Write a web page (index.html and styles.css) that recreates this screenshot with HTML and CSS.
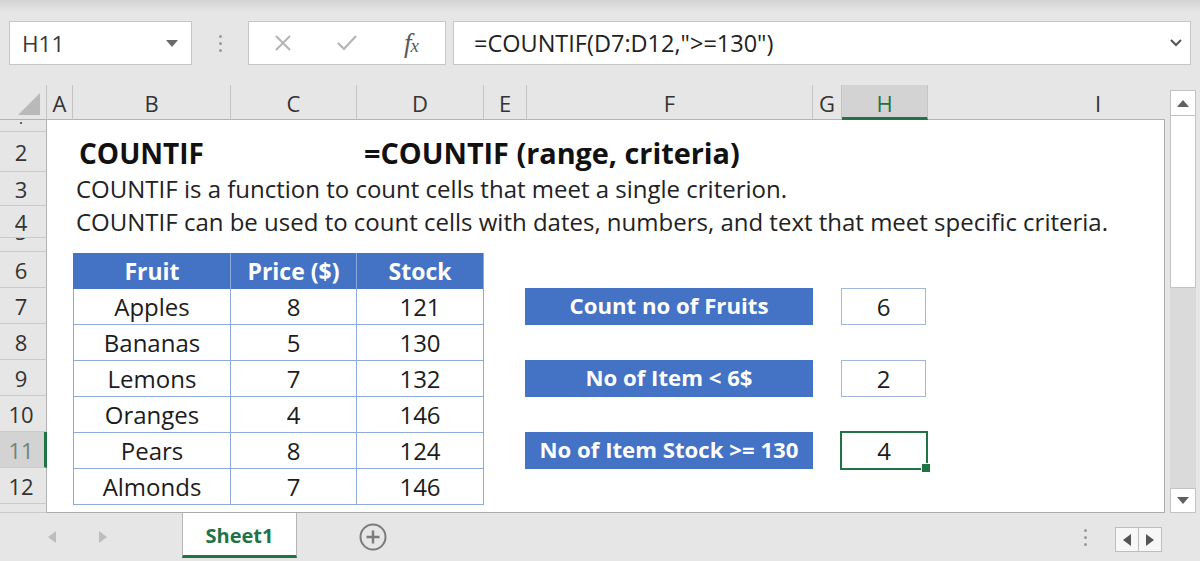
FILE: index.html
```html
<!DOCTYPE html>
<html>
<head>
<meta charset="utf-8">
<title>COUNTIF</title>
<link rel="stylesheet" href="styles.css">
</head>
<body>
<div class="app">
  <div class="topbar">
    <div class="namebox">
      <span class="nb-text">H11</span>
      <svg class="nb-caret" width="12" height="7" viewBox="0 0 12 7"><polygon points="0,0 12,0 6,7" fill="#6a6a6a"/></svg>
    </div>
    <div class="vdots"><i></i><i></i><i></i></div>
    <div class="fnbox">
      <div class="slot"><svg width="18" height="18" viewBox="0 0 18 18"><path d="M2 2 L16 16 M16 2 L2 16" stroke="#b4b4b4" stroke-width="2" fill="none"/></svg></div>
      <div class="slot"><svg width="22" height="18" viewBox="0 0 22 18"><path d="M2 9 L8 15 L20 2" stroke="#b4b4b4" stroke-width="2.2" fill="none"/></svg></div>
      <div class="slot"><span class="fx">f<span class="fx-x">x</span></span></div>
    </div>
    <div class="formula">
      <span class="f-text">=COUNTIF(D7:D12,"&gt;=130")</span>
      <svg width="12" height="8" viewBox="0 0 12 8"><path d="M1 1 L6 6 L11 1" stroke="#555" stroke-width="2" fill="none"/></svg>
    </div>
  </div>

  <div class="main">
    <div class="grid">
      <div class="corner"><svg width="22" height="22" viewBox="0 0 22 22"><polygon points="22,0 22,22 0,22" fill="#b9b9b9"/></svg></div>
      <div class="ch">A</div>
      <div class="ch">B</div>
      <div class="ch">C</div>
      <div class="ch">D</div>
      <div class="ch">E</div>
      <div class="ch">F</div>
      <div class="ch">G</div>
      <div class="ch sel">H</div>
      <div class="ch ch-i">I</div>

      <div class="rh r1"><span class="stub"></span></div>
      <div class="rh r2">2</div>
      <div class="rh r3">3</div>
      <div class="rh r4">4</div>
      <div class="rh r5 clip"><span>5</span></div>
      <div class="rh r6">6</div>
      <div class="rh r7">7</div>
      <div class="rh r8">8</div>
      <div class="rh r9">9</div>
      <div class="rh r10">10</div>
      <div class="rh r11 sel">11</div>
      <div class="rh r12">12</div>
      <div class="rh r13"></div>

      <div class="sheet"></div>

      <div class="title r2 t-left">COUNTIF</div>
      <div class="title r2 t-right">=COUNTIF (range, criteria)</div>
      <div class="desc r3">COUNTIF is a function to count cells that meet a single criterion.</div>
      <div class="desc r4">COUNTIF can be used to count cells with dates, numbers, and text that meet specific criteria.</div>

      <div class="tbl">
        <div class="th first">Fruit</div><div class="th">Price ($)</div><div class="th">Stock</div>
        <div class="td first">Apples</div><div class="td">8</div><div class="td">121</div>
        <div class="td first">Bananas</div><div class="td">5</div><div class="td">130</div>
        <div class="td first">Lemons</div><div class="td">7</div><div class="td">132</div>
        <div class="td first">Oranges</div><div class="td">4</div><div class="td">146</div>
        <div class="td first">Pears</div><div class="td">8</div><div class="td">124</div>
        <div class="td first">Almonds</div><div class="td">7</div><div class="td">146</div>
      </div>

      <div class="lbl r7">Count no of Fruits</div>
      <div class="val r7">6</div>
      <div class="lbl r9">No of Item &lt; 6$</div>
      <div class="val r9">2</div>
      <div class="lbl r11">No of Item Stock &gt;= 130</div>
      <div class="val r11 sel">4</div>
    </div>

    <div class="vscroll">
      <div class="sb-btn up"><svg width="12" height="7" viewBox="0 0 12 7"><polygon points="0,7 12,7 6,0" fill="#606060"/></svg></div>
      <div class="sb-thumb"></div>
      <div class="sb-track"></div>
      <div class="sb-btn down"><svg width="12" height="7" viewBox="0 0 12 7"><polygon points="0,0 12,0 6,7" fill="#606060"/></svg></div>
    </div>
  </div>

  <div class="tabbar">
    <div class="tb-nav">
      <span class="tri-l"></span>
      <span class="tri-r"></span>
    </div>
    <div class="tab">Sheet1</div>
    <div class="plus"><svg width="28" height="28" viewBox="0 0 28 28"><circle cx="14" cy="14" r="12.5" stroke="#7b7b7b" stroke-width="2" fill="none"/><path d="M14 7.5 V20.5 M7.5 14 H20.5" stroke="#7b7b7b" stroke-width="2.4"/></svg></div>
    <div class="spacer"></div>
    <div class="hdots"><i></i><i></i><i></i></div>
    <div class="navbox">
      <div class="nb-half"><svg width="8" height="12" viewBox="0 0 8 12"><polygon points="8,0 8,12 0,6" fill="#555"/></svg></div>
      <div class="nb-half"><svg width="8" height="12" viewBox="0 0 8 12"><polygon points="0,0 0,12 8,6" fill="#555"/></svg></div>
    </div>
  </div>
</div>
</body>
</html>
```

FILE: styles.css
```css
* { box-sizing: border-box; }
html, body { margin: 0; padding: 0; }
body {
  width: 1200px;
  height: 561px;
  overflow: hidden;
  background: #e6e6e6;
  font-family: "Open Sans", "Noto Sans", sans-serif;
  color: #222;
}
.app { width: 1200px; height: 561px; display: flex; flex-direction: column; }

/* ---------- top bar ---------- */
.topbar {
  height: 85px;
  flex: none;
  display: flex;
  align-items: flex-start;
  padding: 21px 9px 0 9px;
  background: linear-gradient(#d3d3d3 0, #e6e6e6 12px);
}
.namebox {
  width: 183px;
  height: 44px;
  background: #fff;
  border: 1px solid #c6c6c6;
  display: flex;
  align-items: center;
  justify-content: space-between;
  padding: 0 13px 0 12px;
}
.nb-text { font-size: 22.5px; color: #3a3a3a; }
.vdots {
  width: 56px;
  height: 44px;
  display: flex;
  flex-direction: column;
  align-items: center;
  justify-content: center;
  gap: 4px;
}
.vdots i { display: block; width: 3px; height: 3px; border-radius: 50%; background: #9a9a9a; }
.fnbox {
  width: 198px;
  height: 44px;
  background: #fff;
  border: 1px solid #c6c6c6;
  display: flex;
  align-items: center;
  padding-left: 2px;
}
.slot { width: 64px; display: flex; justify-content: center; align-items: center; }
.fx { font-family: "Liberation Serif", serif; font-style: italic; font-size: 27px; color: #5a5a5a; letter-spacing: -1px; }
.fx-x { font-size: 19px; }
.formula {
  margin-left: 7px;
  flex: 1;
  height: 44px;
  background: #fff;
  border: 1px solid #c6c6c6;
  display: flex;
  align-items: center;
  justify-content: space-between;
  padding: 0 8px 0 20px;
}
.f-text { font-size: 23.5px; color: #222; }

/* ---------- grid ---------- */
.main { height: 428px; flex: none; display: flex; }
.grid {
  width: 1165px;
  height: 428px;
  overflow: hidden;
  display: grid;
  grid-template-columns: 47px 26px 158px 126px 127px 43px 286px 29px 86px 237px;
  grid-template-rows: 35px 12px 40px 34px 32px 14px repeat(7, 36px) 9px;
}
.corner {
  grid-row: 1; grid-column: 1;
  display: flex; justify-content: flex-end; align-items: flex-end;
  padding: 0 6px 4px 0;
  border-right: 1px solid #c4c4c4;
  border-bottom: 1px solid #b3b3b3;
}
.ch {
  grid-row: 1;
  display: flex; align-items: center; justify-content: center;
  font-size: 22px; color: #333;
  border-right: 1px solid #c4c4c4;
  border-bottom: 1px solid #b3b3b3;
  padding-top: 1px;
}
.ch.sel { background: #d3d3d3; color: #217346; border-bottom: 3px solid #217346; padding-top: 3px; }
.ch-i { border-right: none; padding-left: 103px; }

.rh {
  grid-column: 1;
  display: flex; align-items: center; justify-content: center;
  font-size: 22px; line-height: 1; color: #333;
  background: #e6e6e6;
  border-right: 1px solid #b3b3b3;
  border-bottom: 1px solid #cacaca;
  overflow: hidden;
  padding-right: 4px;
}
.rh.sel { background: #d3d3d3; color: #6f8576; border-right: 3px solid #217346; padding-right: 2px; }
.rh.clip { align-items: flex-start; }
.rh.clip span { line-height: 26px; margin-top: -20px; }
.stub { display: block; width: 2px; height: 2px; background: #666; margin-top: -6px; }

.r1 { grid-row: 2; } .r2 { grid-row: 3; } .r3 { grid-row: 4; } .r4 { grid-row: 5; }
.r5 { grid-row: 6; } .r6 { grid-row: 7; } .r7 { grid-row: 8; } .r8 { grid-row: 9; }
.r9 { grid-row: 10; } .r10 { grid-row: 11; } .r11 { grid-row: 12; } .r12 { grid-row: 13; }
.r13 { grid-row: 14; }

.sheet {
  grid-column: 2 / -1;
  grid-row: 2 / -1;
  background: #fff;
  border-right: 1px solid #ababab;
  border-bottom: 1px solid #ababab;
}

.title {
  font-size: 28px; font-weight: 700; color: #111;
  white-space: nowrap;
  display: flex; align-items: center;
  padding-top: 1px;
}
.t-left { grid-column: 3 / span 2; padding-left: 6px; }
.t-right { grid-column: 5 / -1; padding-left: 7px; font-size: 28.8px; }
.desc {
  grid-column: 3 / -1;
  font-size: 24px; line-height: 1; color: #222;
  white-space: nowrap;
  display: flex; align-items: center;
  padding-left: 3px;
}

.tbl {
  grid-column: 3 / 6;
  grid-row: 7 / 14;
  display: grid;
  grid-template-columns: 158px 126px 127px;
  grid-template-rows: 36px repeat(6, 36px);
  padding-top: 1px;
}
.th, .td {
  display: flex; align-items: center; justify-content: center;
  font-size: 24px; line-height: 1;
}
.th {
  background: #4472c4; color: #fff; font-weight: 700; font-size: 23px;
  border-right: 1px solid #8eaadb;
}
.td {
  color: #1c1c1c;
  border-right: 1px solid #8eaadb;
  border-bottom: 1px solid #8eaadb;
}
.th.first { border-left: 1px solid #4472c4; }
.td.first { border-left: 1px solid #8eaadb; }

.lbl {
  grid-column: 7;
  margin: 0 0 -1px -2px;
  background: #4472c4;
  color: #fff; font-weight: 700; font-size: 22.2px; line-height: 1;
  display: flex; align-items: center; justify-content: center;
  white-space: nowrap;
}
.val {
  grid-column: 9;
  margin: 0 2px -1px -1px;
  border: 1px solid #a3b7dd;
  display: flex; align-items: center; justify-content: center;
  font-size: 24px; line-height: 1; color: #1c1c1c;
}
.val.sel {
  position: relative;
  border: 2px solid #217346;
  margin: -1px 0 -2px -2px;
}
.val.sel::after {
  content: "";
  position: absolute;
  right: -5px; bottom: -5px;
  width: 8px; height: 8px;
  background: #217346;
  border: 1px solid #fff;
}

/* ---------- vertical scrollbar ---------- */
.vscroll {
  width: 26px;
  margin-left: 5px;
  padding-top: 5px;
  display: flex; flex-direction: column;
}
.sb-btn {
  height: 26px; flex: none;
  background: #fff;
  border: 1px solid #c3c3c3;
  display: flex; align-items: center; justify-content: center;
}
.sb-btn.down { height: 25px; }
.sb-thumb { height: 172px; flex: none; background: #fff; border: 1px solid #c3c3c3; border-top: none; }
.sb-track { flex: 1; background: #dadada; }

/* ---------- tab bar ---------- */
.tabbar { height: 48px; flex: none; display: flex; align-items: stretch; }
.tb-nav { width: 182px; display: flex; align-items: center; padding-left: 48px; }
.tri-l, .tri-r { display: block; width: 0; height: 0; border-top: 6px solid transparent; border-bottom: 6px solid transparent; }
.tri-l { border-right: 8px solid #bdbdbd; }
.tri-r { border-left: 8px solid #bdbdbd; margin-left: 43px; }
.tab {
  width: 115px;
  background: #fff;
  border-left: 1px solid #b5b5b5;
  border-right: 1px solid #b5b5b5;
  border-bottom: 3px solid #217346;
  margin-bottom: 3px;
  display: flex; align-items: center; justify-content: center;
  color: #217346; font-weight: 700; font-size: 20px;
  padding-top: 2px;
}
.plus { margin-left: 62px; display: flex; align-items: center; }
.spacer { flex: 1; }
.hdots { width: 8px; display: flex; flex-direction: column; justify-content: center; align-items: center; gap: 4px; margin-right: 26px; }
.hdots i { display: block; width: 3px; height: 3px; border-radius: 50%; background: #9a9a9a; }
.navbox {
  align-self: flex-start;
  margin-top: 14px;
  margin-right: 38px;
  width: 47px; height: 25px;
  display: flex;
  border: 1px solid #bdbdbd;
  background: #f7f7f7;
}
.nb-half { flex: 1; display: flex; align-items: center; justify-content: center; }
.nb-half + .nb-half { border-left: 1px solid #bdbdbd; }
```
